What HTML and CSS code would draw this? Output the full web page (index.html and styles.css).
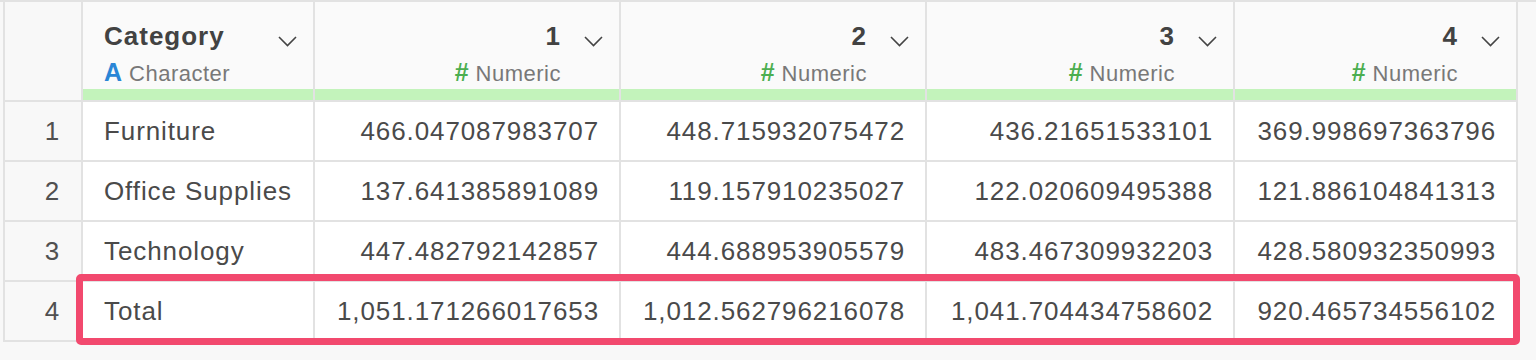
FILE: index.html
```html
<!DOCTYPE html>
<html lang="en">
<head>
<meta charset="utf-8">
<title>Table</title>
<link rel="stylesheet" href="styles.css">
</head>
<body>
<div class="page">
  <div class="grid">
    <div class="hcell rn-head"></div>

    <div class="hcell">
      <div class="hd-main">
        <div class="hd-text left">
          <div class="hd-title">Category</div>
          <div class="hd-type"><span class="ico ico-char">A</span>Character</div>
        </div>
        <svg class="chev" width="19" height="11" viewBox="0 0 19 11"><polyline points="1,1 9.5,9.5 18,1" fill="none" stroke="#444" stroke-width="1.6"/></svg>
      </div>
      <div class="hd-bar"></div>
    </div>

    <div class="hcell">
      <div class="hd-main">
        <div class="hd-text">
          <div class="hd-title">1</div>
          <div class="hd-type"><span class="ico ico-num">#</span>Numeric</div>
        </div>
        <svg class="chev" width="19" height="11" viewBox="0 0 19 11"><polyline points="1,1 9.5,9.5 18,1" fill="none" stroke="#444" stroke-width="1.6"/></svg>
      </div>
      <div class="hd-bar"></div>
    </div>

    <div class="hcell">
      <div class="hd-main">
        <div class="hd-text">
          <div class="hd-title">2</div>
          <div class="hd-type"><span class="ico ico-num">#</span>Numeric</div>
        </div>
        <svg class="chev" width="19" height="11" viewBox="0 0 19 11"><polyline points="1,1 9.5,9.5 18,1" fill="none" stroke="#444" stroke-width="1.6"/></svg>
      </div>
      <div class="hd-bar"></div>
    </div>

    <div class="hcell">
      <div class="hd-main">
        <div class="hd-text">
          <div class="hd-title">3</div>
          <div class="hd-type"><span class="ico ico-num">#</span>Numeric</div>
        </div>
        <svg class="chev" width="19" height="11" viewBox="0 0 19 11"><polyline points="1,1 9.5,9.5 18,1" fill="none" stroke="#444" stroke-width="1.6"/></svg>
      </div>
      <div class="hd-bar"></div>
    </div>

    <div class="hcell">
      <div class="hd-main">
        <div class="hd-text">
          <div class="hd-title">4</div>
          <div class="hd-type"><span class="ico ico-num">#</span>Numeric</div>
        </div>
        <svg class="chev" width="19" height="11" viewBox="0 0 19 11"><polyline points="1,1 9.5,9.5 18,1" fill="none" stroke="#444" stroke-width="1.6"/></svg>
      </div>
      <div class="hd-bar"></div>
    </div>

    <div class="cell rn">1</div>
    <div class="cell txt">Furniture</div>
    <div class="cell num">466.047087983707</div>
    <div class="cell num">448.715932075472</div>
    <div class="cell num">436.21651533101</div>
    <div class="cell num">369.998697363796</div>

    <div class="cell rn">2</div>
    <div class="cell txt">Office Supplies</div>
    <div class="cell num">137.641385891089</div>
    <div class="cell num">119.157910235027</div>
    <div class="cell num">122.020609495388</div>
    <div class="cell num">121.886104841313</div>

    <div class="cell rn">3</div>
    <div class="cell txt">Technology</div>
    <div class="cell num">447.482792142857</div>
    <div class="cell num">444.688953905579</div>
    <div class="cell num">483.467309932203</div>
    <div class="cell num">428.580932350993</div>

    <div class="cell rn">4</div>
    <div class="cell txt">Total</div>
    <div class="cell num">1,051.171266017653</div>
    <div class="cell num">1,012.562796216078</div>
    <div class="cell num">1,041.704434758602</div>
    <div class="cell num">920.465734556102</div>

    <div class="highlight"></div>
  </div>
</div>
</body>
</html>
```

FILE: styles.css
```css
* { box-sizing: border-box; }

html, body {
  margin: 0;
  padding: 0;
  background: #f8f8f8;
}

body {
  font-family: "Liberation Sans", Arial, Helvetica, sans-serif;
  color: #4a4a4a;
}

.page {
  border-top: 2px solid #e2e2e2;
  height: 360px;
  overflow: hidden;
}

.grid {
  position: relative;
  display: grid;
  grid-template-columns: 78px 232px 306px 306px 308px 283px;
  grid-auto-rows: 60px;
  grid-template-rows: 100px;
  width: max-content;
  margin-left: 3px;
  border-left: 2px solid #e2e2e2;
}

.hcell {
  background: #fafafa;
  border-right: 2px solid #e2e2e2;
  border-bottom: 2px solid #e2e2e2;
  display: flex;
  flex-direction: column;
}

.rn-head {
  background: #f8f8f8;
}

.hd-main {
  flex: 1;
  display: flex;
  align-items: flex-start;
  padding: 20px 16px 0 21px;
}

.hd-text {
  flex: 1;
  text-align: right;
}

.hd-text.left {
  text-align: left;
}

.hd-title {
  font-size: 26px;
  line-height: 28px;
  font-weight: bold;
  letter-spacing: 1px;
  color: #424242;
}

.hd-type {
  margin-top: 9px;
  font-size: 22px;
  line-height: 26px;
  letter-spacing: 0.5px;
  color: #787878;
}

.ico {
  font-size: 25px;
  font-weight: bold;
  margin-right: 7px;
  letter-spacing: 0;
}

.ico-char { color: #2a86d6; }
.ico-num { color: #4cae50; }

.chev {
  flex: none;
  margin-left: 23px;
  margin-top: 14px;
}

.hd-bar {
  height: 11px;
  background: #c3f3bb;
}

.cell {
  border-right: 2px solid #e2e2e2;
  border-bottom: 2px solid #e2e2e2;
  font-size: 26px;
  line-height: 58px;
  letter-spacing: 0.9px;
  white-space: nowrap;
  overflow: hidden;
  background: #ffffff;
}

.rn {
  background: #f8f8f8;
  text-align: right;
  padding-right: 21px;
  color: #505050;
}

.txt {
  padding-left: 21px;
}

.num {
  text-align: right;
  padding-right: 20px;
}

.highlight {
  position: absolute;
  left: 71px;
  top: 272px;
  width: 1444px;
  height: 71px;
  border: 7px solid #f2496e;
  border-radius: 5px;
  pointer-events: none;
}
```
